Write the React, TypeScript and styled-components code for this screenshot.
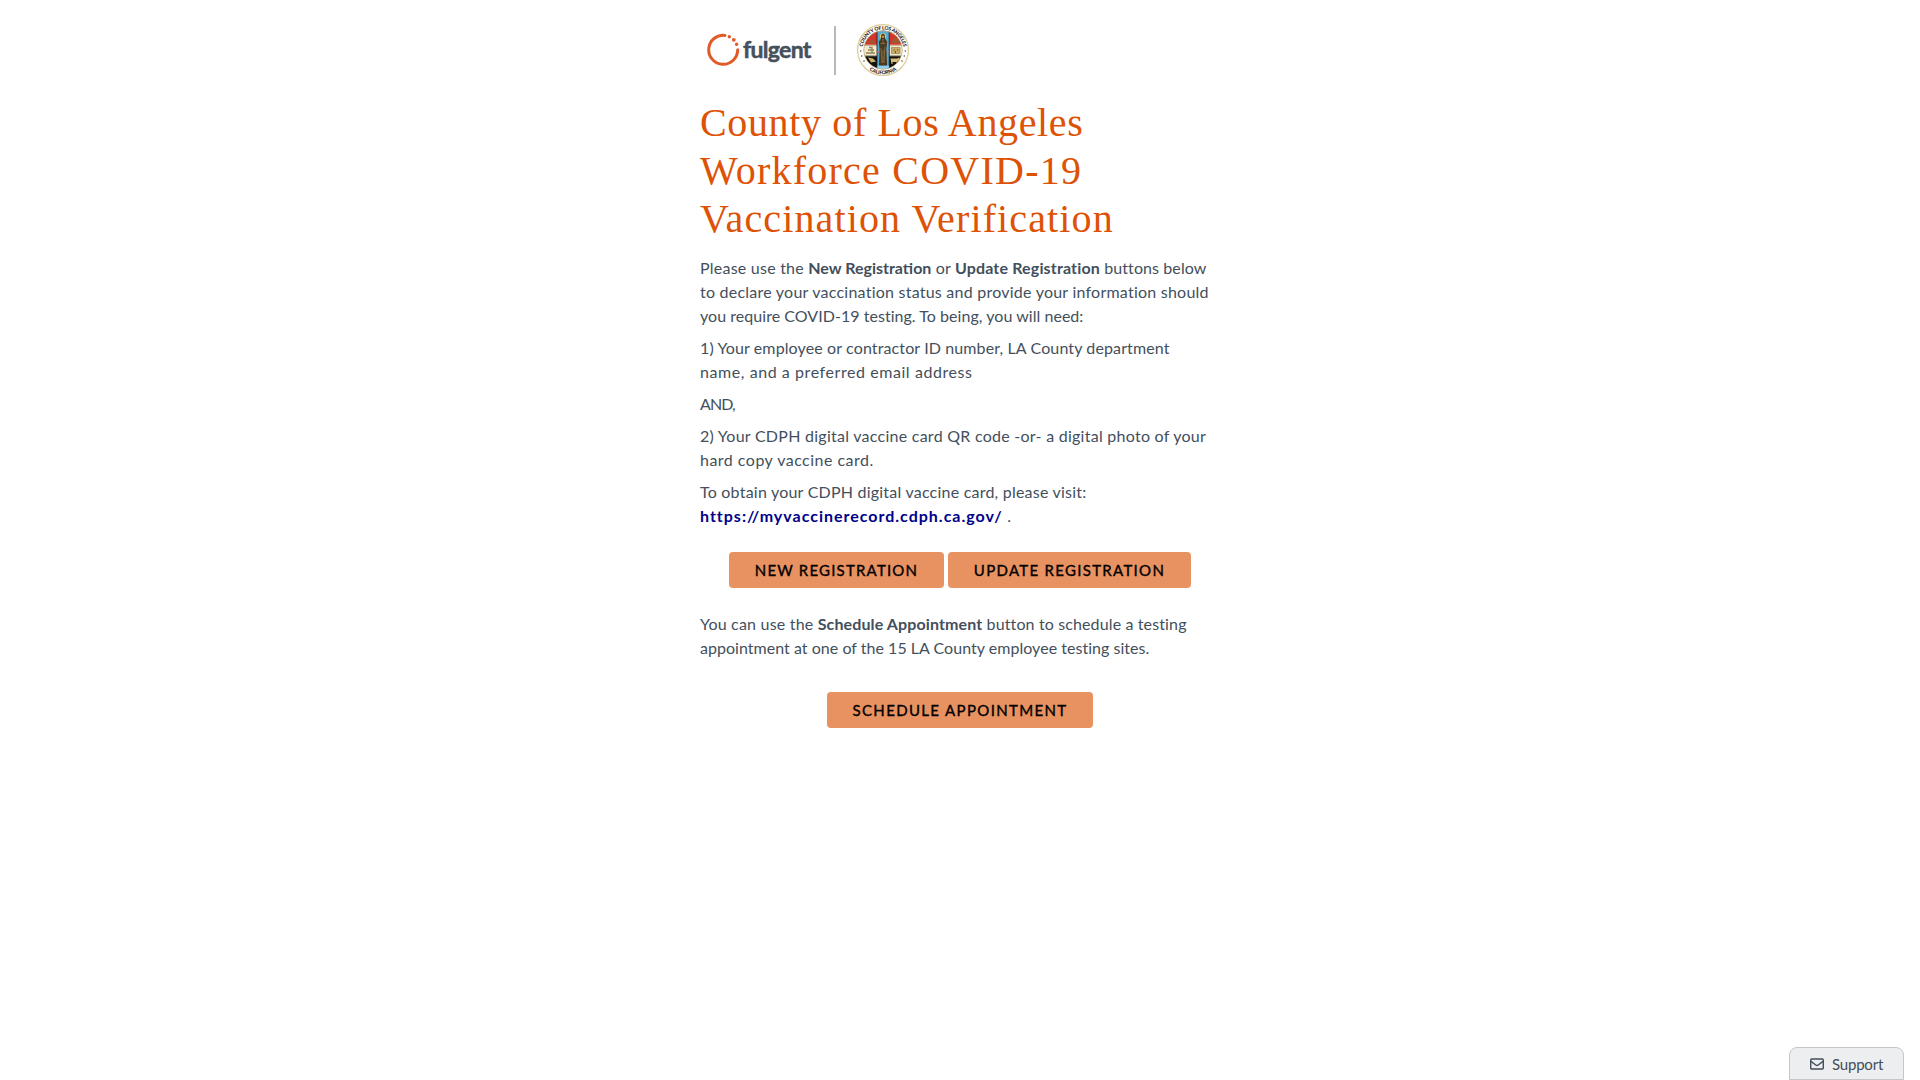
import React from "react";
import styled, { createGlobalStyle } from "styled-components";

const sans = `Lato, "Open Sans", "Liberation Sans", sans-serif`;

const GlobalStyle = createGlobalStyle`
  *, *::before, *::after { box-sizing: border-box; }
  body { margin: 0; background: #fff; color: #434f5c; font: 400 16px/24px ${sans}; }
`;

const Page = styled.div`
  display: flex;
  flex-direction: column;
  min-height: 100vh;
`;

const Column = styled.main`
  flex: 1;
  width: 520px;
  margin: 0 auto;
`;

const Header = styled.header`
  display: flex;
  align-items: center;
  height: 99px;
  padding: 0 0 1px 4px;
`;

const FulgentMark = styled.svg`
  width: 120px;
  height: 98px;
  overflow: visible;
`;

const Divider = styled.div`
  width: 2px;
  height: 49px;
  margin: 3px 19px 0 10px;
  background: #b4b9be;
`;

const SealMark = styled.svg`
  width: 56px;
  height: 98px;
  overflow: visible;
`;

const Title = styled.h1`
  margin: 0 0 13px;
  font: 400 40px/48px "Liberation Serif", serif;
  color: #dd5205;
`;

const Line = styled.span<{ $spacing?: number }>`
  display: block;
  white-space: pre;
  letter-spacing: ${(p) => p.$spacing ?? 0}px;
`;

const Run = styled.span<{ $spacing: number }>`
  letter-spacing: ${(p) => p.$spacing}px;
`;

const Strong = styled.strong<{ $spacing: number }>`
  font-weight: 700;
  letter-spacing: ${(p) => p.$spacing}px;
`;

const Paragraph = styled.p`
  margin: 0 0 8px;
`;

const RecordLink = styled.a`
  font-weight: 700;
  letter-spacing: 0.99px;
  color: #00008b;
  text-decoration: none;
`;

const Actions = styled.div<{ $top: number; $bottom?: number }>`
  display: flex;
  justify-content: center;
  gap: 4px;
  margin: ${(p) => p.$top}px 0 ${(p) => p.$bottom ?? 0}px;
`;

const Button = styled.button<{ $width: number; $spacing: number }>`
  width: ${(p) => p.$width}px;
  height: 36px;
  padding: 0;
  border: 0;
  border-radius: 4px;
  background: #e89161;
  color: #000;
  font: 400 15px/24px ${sans};
  -webkit-text-stroke: 0.35px #000;
  letter-spacing: ${(p) => p.$spacing}px;
  text-transform: uppercase;
  white-space: nowrap;
  cursor: pointer;
`;

const Footer = styled.footer`
  display: flex;
  justify-content: flex-end;
  padding-right: 16px;
`;

const Support = styled.button`
  display: flex;
  align-items: center;
  gap: 8px;
  width: 115px;
  height: 33px;
  padding: 0 0 0 20px;
  border: 1px solid #c4c6c9;
  border-radius: 8px 8px 0 0;
  background: #edeef0;
  color: #434f5c;
  font: 400 15px/24px ${sans};
  letter-spacing: -0.2px;
`;

const Envelope = styled.svg`
  width: 14px;
  height: 12px;
`;

function FulgentLogo() {
  return (
    <FulgentMark viewBox="704 0 120 98" aria-label="fulgent">
      <path d="M725 35.4A14.5 14.5 0 1 0 737.7 49.8" fill="none" stroke="#e15a29" strokeWidth="3" strokeLinecap="round" />
      <g fill="#e15a29">
        <circle cx="729.3" cy="36.7" r="1.7" />
        <circle cx="733.8" cy="39.8" r="1.9" />
        <circle cx="736.6" cy="44.3" r="1.7" />
      </g>
      <text x="743" y="57.8" fill="#46505d" stroke="#46505d" strokeWidth=".5" fontFamily="Lato, sans-serif" fontWeight="700" fontSize="23" letterSpacing="-.7">
        fulgent
      </text>
    </FulgentMark>
  );
}

function CountySeal() {
  return (
    <SealMark viewBox="855 0 56 98" aria-label="County of Los Angeles California">
      <defs>
        <clipPath id="disc"><circle cx="883" cy="50" r="19.2" /></clipPath>
        <path id="arcTop" d="M862.5 50A20.5 20.5 0 0 1 903.5 50" />
        <path id="arcBottom" d="M858.8 50A24.2 24.2 0 0 0 907.2 50" />
      </defs>
      <circle cx="883" cy="50" r="25.4" fill="#fffefa" stroke="#dccb98" strokeWidth="1.2" />
      <g clipPath="url(#disc)">
        <rect x="863" y="30" width="40" height="40" fill="#15120f" />
        <rect x="863" y="30" width="40" height="15" fill="#d5342a" />
        <path d="M868 43c1-3 3-1 4-4 1 2 3 2 3 4z M892 43c0-4 2-5 3.500-5s3.500 1 4 5z" fill="#9c5a30" />
        <rect x="863" y="45.300" width="14" height="10.200" fill="#f0e9d2" />
        <rect x="889.300" y="45.300" width="14" height="10.200" fill="#f0e9d2" />
        <path d="M866 53h9M868 50h6M869 47.500h3v5" stroke="#958350" strokeWidth="1.300" fill="none" />
        <path d="M891.500 47.500h8.500v6h-8.500z" fill="#c7ac66" stroke="#8d7545" strokeWidth=".6" />
        <path d="M893.500 50h1.200M897 50h1.200M895.500 53v-1.800" stroke="#5c4a2c" strokeWidth="1" />
        <path d="M868 57.500l5 1 3 3-5 1z" fill="#cdb26a" />
        <path d="M890.500 58.500h7l2-1v3l-2 .5v3h-1v-2h-4v2h-1z" fill="#d6bd7b" />
        <path d="M863 45h40M863 55.800h40" stroke="#e0d2a6" strokeWidth=".7" />
        <rect x="877" y="30" width="12.200" height="40" fill="#55abd6" />
        <path d="M877 30v40M889.200 30v40" stroke="#211c18" strokeWidth=".8" />
        <rect x="877.400" y="65.500" width="11.400" height="4" fill="#8fd0ef" />
        <circle cx="883" cy="36.300" r="3.100" fill="#e0cb6f" />
        <path d="M881.200 35q1.800-2.600 3.600 0l.4 4 2 2.500-.8 8 .7 16h-8.200l.7-16-.8-8 2-2.500z" fill="#493a20" />
        <circle cx="883" cy="36.700" r="1.200" fill="#c19a5a" />
        <path d="M883 39v5M880.500 43.500h5M881 48l1 15M884.800 47l-.8 16M883 50v13" stroke="#a8874a" strokeWidth=".6" />
        <path d="M877.400 51.600h2M886.800 51.600h2" stroke="#e2606a" strokeWidth="1.300" />
      </g>
      <circle cx="883" cy="50" r="19.2" fill="none" stroke="#cdb97f" strokeWidth=".7" />
      <g fill="#28231f" fontFamily="Lato, sans-serif" fontWeight="900">
        <text fontSize="5" letterSpacing="-.25"><textPath href="#arcTop" startOffset="50%" textAnchor="middle">COUNTY OF LOS ANGELES</textPath></text>
        <text fontSize="5" letterSpacing="-.1"><textPath href="#arcBottom" startOffset="50%" textAnchor="middle">CALIFORNIA</textPath></text>
      </g>
      <g fill="#59534a">
        {[[860.7, 51], [861.7, 56], [864, 61], [905.3, 51], [904.3, 56], [902, 61]].map(([x, y]) => (
          <circle key={`${x}-${y}`} cx={x} cy={y} r=".8" />
        ))}
      </g>
    </SealMark>
  );
}

export default function App() {
  return (
    <Page>
      <GlobalStyle />
      <Column>
        <Header>
          <FulgentLogo />
          <Divider />
          <CountySeal />
        </Header>
        <Title>
          <Line $spacing={0.64}>County of Los Angeles</Line>
          <Line $spacing={1.23}>Workforce COVID-19</Line>
          <Line $spacing={1.12}>Vaccination Verification</Line>
        </Title>
        <Paragraph>
          <Line>
            <Run $spacing={0.23}>Please use the </Run>
            <Strong $spacing={0}>New Registration</Strong>
            <Run $spacing={0.2}> or </Run>
            <Strong $spacing={0.16}>Update Registration</Strong>
            <Run $spacing={0.1}> buttons below</Run>
          </Line>
          <Line $spacing={0.235}>to declare your vaccination status and provide your information should</Line>
          <Line $spacing={0.04}>you require COVID-19 testing. To being, you will need:</Line>
        </Paragraph>
        <Paragraph>
          <Line $spacing={0.12}>1) Your employee or contractor ID number, LA County department</Line>
          <Line $spacing={0.57}>name, and a preferred email address</Line>
        </Paragraph>
        <Paragraph>
          <Line $spacing={-0.95}>AND,</Line>
        </Paragraph>
        <Paragraph>
          <Line $spacing={0.26}>2) Your CDPH digital vaccine card QR code -or- a digital photo of your</Line>
          <Line $spacing={0.48}>hard copy vaccine card.</Line>
        </Paragraph>
        <Paragraph>
          <Line $spacing={0.22}>To obtain your CDPH digital vaccine card, please visit:</Line>
          <Line>
            <RecordLink href="#">https://myvaccinerecord.cdph.ca.gov/</RecordLink>
            <Run $spacing={0.4}> .</Run>
          </Line>
        </Paragraph>
        <Actions $top={24} $bottom={24}>
          <Button $width={215} $spacing={1.2}>New Registration</Button>
          <Button $width={243} $spacing={1.3}>Update Registration</Button>
        </Actions>
        <Paragraph>
          <Line>
            <Run $spacing={0.2}>You can use the </Run>
            <Strong $spacing={0.12}>Schedule Appointment</Strong>
            <Run $spacing={0.13}> button to schedule a testing</Run>
          </Line>
          <Line $spacing={0.03}>appointment at one of the 15 LA County employee testing sites.</Line>
        </Paragraph>
        <Actions $top={32}>
          <Button $width={266} $spacing={1.35}>Schedule Appointment</Button>
        </Actions>
      </Column>
      <Footer>
        <Support>
          <Envelope viewBox="0 0 14 12" fill="none" stroke="currentColor" strokeWidth="1.4">
            <rect x=".7" y="1" width="12.6" height="10" rx="1" />
            <path d="M1 3.4 5.8 7q1.2.9 2.4 0L13 3.4" />
          </Envelope>
          Support
        </Support>
      </Footer>
    </Page>
  );
}
